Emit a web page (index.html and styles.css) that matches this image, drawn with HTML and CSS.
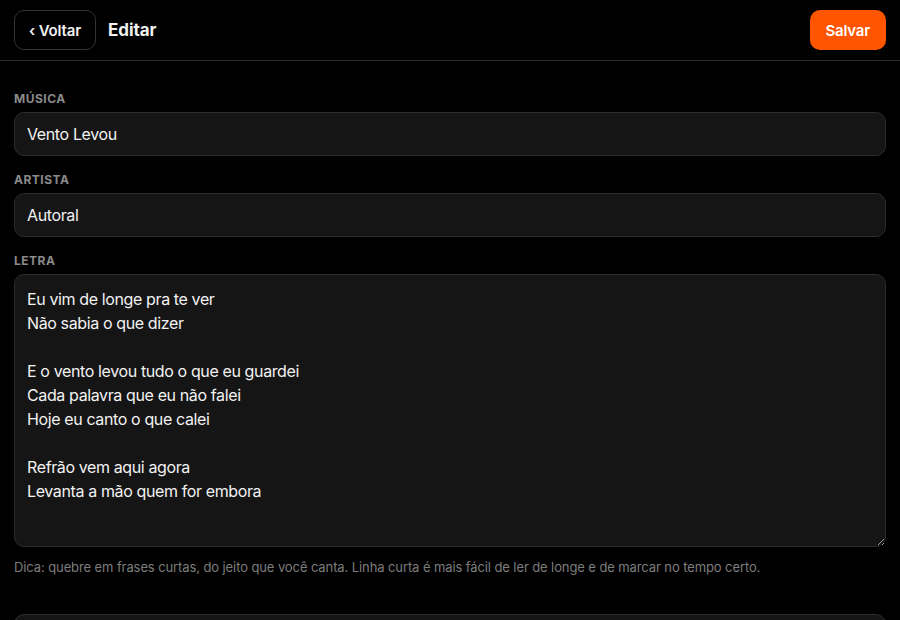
FILE: index.html
```html
<!DOCTYPE html>
<html lang="pt-BR">
<head>
<meta charset="utf-8">
<title>Editar</title>
<link rel="stylesheet" href="styles.css">
</head>
<body>
<header class="topbar">
  <div class="topbar-left">
    <button class="btn-back">‹ Voltar</button>
    <h1 class="title">Editar</h1>
  </div>
  <button class="btn-save">Salvar</button>
</header>
<main class="content">
  <div class="field">
    <label class="label">Música</label>
    <input class="input" type="text" value="Vento Levou">
  </div>
  <div class="field">
    <label class="label">Artista</label>
    <input class="input" type="text" value="Autoral">
  </div>
  <div class="field">
    <label class="label">Letra</label>
    <textarea class="input textarea">Eu vim de longe pra te ver
Não sabia o que dizer

E o vento levou tudo o que eu guardei
Cada palavra que eu não falei
Hoje eu canto o que calei

Refrão vem aqui agora
Levanta a mão quem for embora</textarea>
    <p class="hint">Dica: quebre em frases curtas, do jeito que você canta. Linha curta é mais fácil de ler de longe e de marcar no tempo certo.</p>
  </div>
  <div class="card"></div>
</main>
</body>
</html>
```
FILE: styles.css
```css
* { box-sizing: border-box; }
html, body { margin: 0; background: #000; }
body {
  font-family: Inter, "Noto Sans", sans-serif;
  color: #f2f2f2;
  overflow: hidden;
  height: 620px;
}
.topbar {
  display: flex;
  align-items: center;
  justify-content: space-between;
  height: 61px;
  padding: 0 14px;
  border-bottom: 1px solid #2e2e2e;
}
.topbar-left { display: flex; align-items: center; gap: 12px; }
.btn-back {
  height: 40px;
  padding: 0 14px;
  background: #000;
  color: #f2f2f2;
  border: 1px solid #333;
  border-radius: 10px;
  font: 600 15px/1 Inter, sans-serif;
  letter-spacing: -0.15px;
}
.title { margin: 0; font: 700 17px/1 Inter, sans-serif; color: #f2f2f2; letter-spacing: -0.1px; }
.btn-save {
  height: 40px;
  padding: 0 16px;
  background: #ff5500;
  color: #fff;
  border: 0;
  border-radius: 10px;
  font: 600 15px/1 Inter, sans-serif;
  letter-spacing: -0.2px;
}
.content { padding: 30px 14px 0; }
.field { display: flex; flex-direction: column; margin-bottom: 16px; }
.label {
  font-size: 12px;
  line-height: 16px;
  font-weight: 700;
  letter-spacing: 0.5px;
  text-transform: uppercase;
  color: #8a8a8a;
  margin-bottom: 5px;
}
.input {
  height: 44px;
  padding: 0 12px;
  background: #151515;
  border: 1px solid #2c2c2c;
  border-radius: 10px;
  color: #f2f2f2;
  font: 400 16px/24px Inter, sans-serif;
  letter-spacing: -0.38px;
  outline: none;
}
.textarea {
  height: 273px;
  padding: 12px;
  resize: vertical;
}
.hint {
  margin: 11px 0 0;
  font-size: 13px;
  line-height: 18px;
  letter-spacing: -0.1px;
  color: #7d7d7d;
}
.card {
  margin-top: 38px;
  height: 60px;
  background: #151515;
  border: 1px solid #2c2c2c;
  border-radius: 10px;
}
```
